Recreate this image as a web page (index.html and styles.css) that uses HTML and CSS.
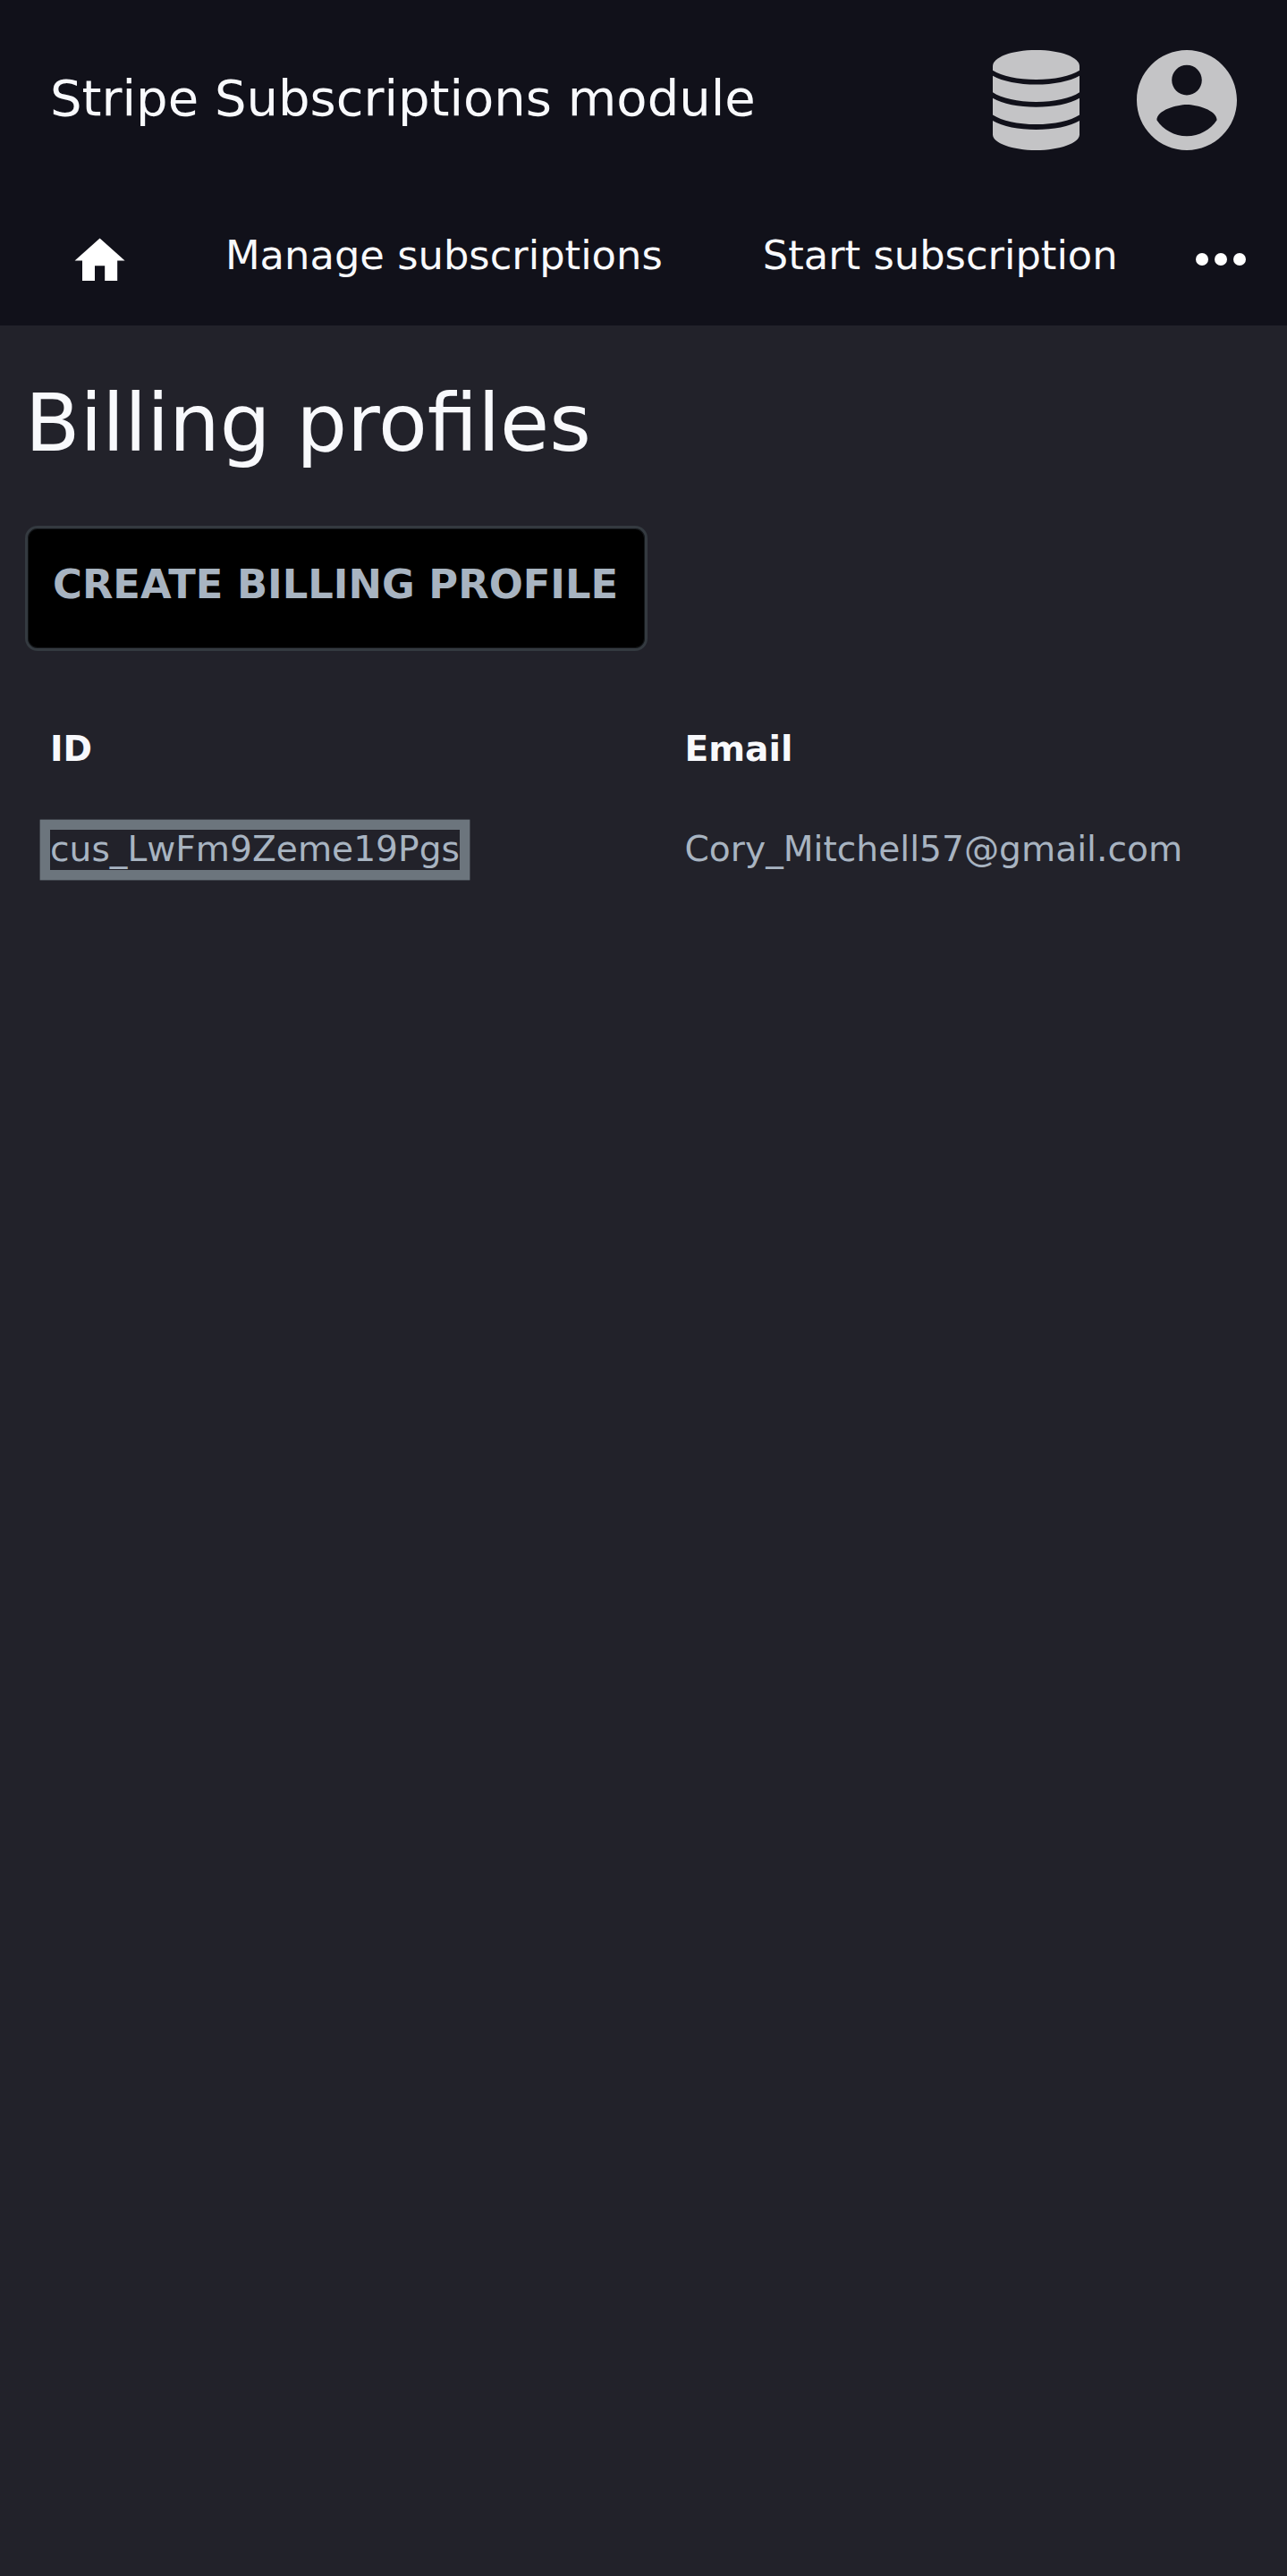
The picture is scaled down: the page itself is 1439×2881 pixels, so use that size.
FILE: index.html
```html
<!DOCTYPE html>
<html lang="en">
<head>
<meta charset="utf-8">
<title>Stripe Subscriptions module</title>
<link rel="stylesheet" href="styles.css">
</head>
<body>
<header class="header">
  <div class="topbar">
    <div class="title">Stripe Subscriptions module</div>
    <svg class="icon-db" viewBox="0 0 97 112" aria-hidden="true">
      <path d="M0 22.7V18C0 8 21 0 48.5 0S97 8 97 18V22.7C87 29 69 33 48.5 33S10 29 0 22.7z"/>
      <path d="M0 28.7C11 35 29 38.5 48.5 38.5S86 35 97 28.7V47.3C87 54 69 57.9 48.5 57.9S10 54 0 47.3z"/>
      <path d="M0 53.8C11 60.2 29 63.8 48.5 63.8S86 60.2 97 53.8V72.4C87 79 69 83 48.5 83S10 79 0 72.4z"/>
      <path d="M0 79C11 85.4 29 89 48.5 89S86 85.4 97 79V94.5C97 104 75 112 48.5 112S0 104 0 94.5z"/>
    </svg>
    <svg class="icon-user" viewBox="2 2 20 20" aria-hidden="true">
      <path d="M12 2C6.48 2 2 6.48 2 12s4.48 10 10 10 10-4.48 10-10S17.52 2 12 2zm0 3c1.66 0 3 1.34 3 3s-1.34 3-3 3-3-1.34-3-3 1.34-3 3-3zm0 14.2c-2.5 0-4.71-1.28-6-3.22.03-1.99 4-3.08 6-3.08 1.99 0 5.97 1.09 6 3.08-1.29 1.94-3.5 3.22-6 3.22z"/>
    </svg>
  </div>
  <nav class="nav">
    <svg class="icon-home" viewBox="0 0 24 24" aria-hidden="true"><path d="M10 20v-6h4v6h5v-8h3L12 3 2 12h3v8z"/></svg>
    <div class="nav-links">
      <a>Manage subscriptions</a>
      <a>Start subscription</a>
    </div>
    <svg class="icon-more" viewBox="0 0 24 24" aria-hidden="true"><circle cx="6" cy="12" r="2"/><circle cx="12" cy="12" r="2"/><circle cx="18" cy="12" r="2"/></svg>
  </nav>
</header>
<main class="main">
  <h1 class="heading">Billing profiles</h1>
  <button class="create">Create billing profile</button>
  <div class="table">
    <div class="th">ID</div>
    <div class="th">Email</div>
    <div><a class="selected">cus_LwFm9Zeme19Pgs</a></div>
    <div>Cory_Mitchell57@gmail.com</div>
  </div>
</main>
</body>
</html>
```
FILE: styles.css
```css
* { box-sizing: border-box; }
body {
  margin: 0;
  min-height: 2881px;
  background: #22222a;
  color: #f8f9fc;
  font-family: "DejaVu Sans", sans-serif;
}
.header { height: 364px; background: #11111a; }
.topbar {
  display: flex;
  align-items: center;
  height: 224px;
  padding: 0 56px;
}
.title { flex: 1; font-size: 56px; line-height: 66px; padding-bottom: 4px; }
.icon-db { width: 97px; height: 112px; margin-right: 64px; fill: #c4c4c6; }
.icon-user { width: 112px; height: 112px; fill: #c4c4c6; }
.nav {
  display: flex;
  align-items: flex-start;
  padding: 34px 32px 0 78.4px;
}
.nav-links {
  display: flex;
  gap: 112px;
  margin-top: 2px;
  font-size: 44.8px;
  line-height: 52px;
  white-space: nowrap;
}
.icon-home { flex: none; width: 67.2px; height: 67.2px; margin-right: 106.4px; fill: #fff; }
.icon-more { flex: none; width: 84px; height: 84px; margin: -10px 0 0 auto; fill: #fff; }
.main { padding: 57px 28px 0; }
.heading { margin: 0; font-size: 89.6px; font-weight: 400; line-height: 104px; }
.create {
  display: block;
  width: 696px;
  height: 140px;
  margin: 63px 0 0;
  padding: 0 30px 9px 28px;
  border: 3px solid #343a40;
  border-radius: 14px;
  box-shadow: inset 0 0 0 1px #14171a;
  background: #000;
  color: #a8b4c1;
  font: bold 44.8px/52px "DejaVu Sans", sans-serif;
  text-transform: uppercase;
  white-space: nowrap;
}
.table {
  display: grid;
  grid-template-columns: 709.5px auto;
  margin: 81px 0 0 28px;
  row-gap: 55px;
  color: #a8b4c1;
  font-size: 39.2px;
  line-height: 57px;
}
.th { font-weight: 700; color: #f8f9fc; }
.selected {
  display: block;
  width: fit-content;
  height: 45px;
  margin-top: 7px;
  line-height: 43px;
  box-shadow: 0 0 0 11.4px #6c757d;
}
```
